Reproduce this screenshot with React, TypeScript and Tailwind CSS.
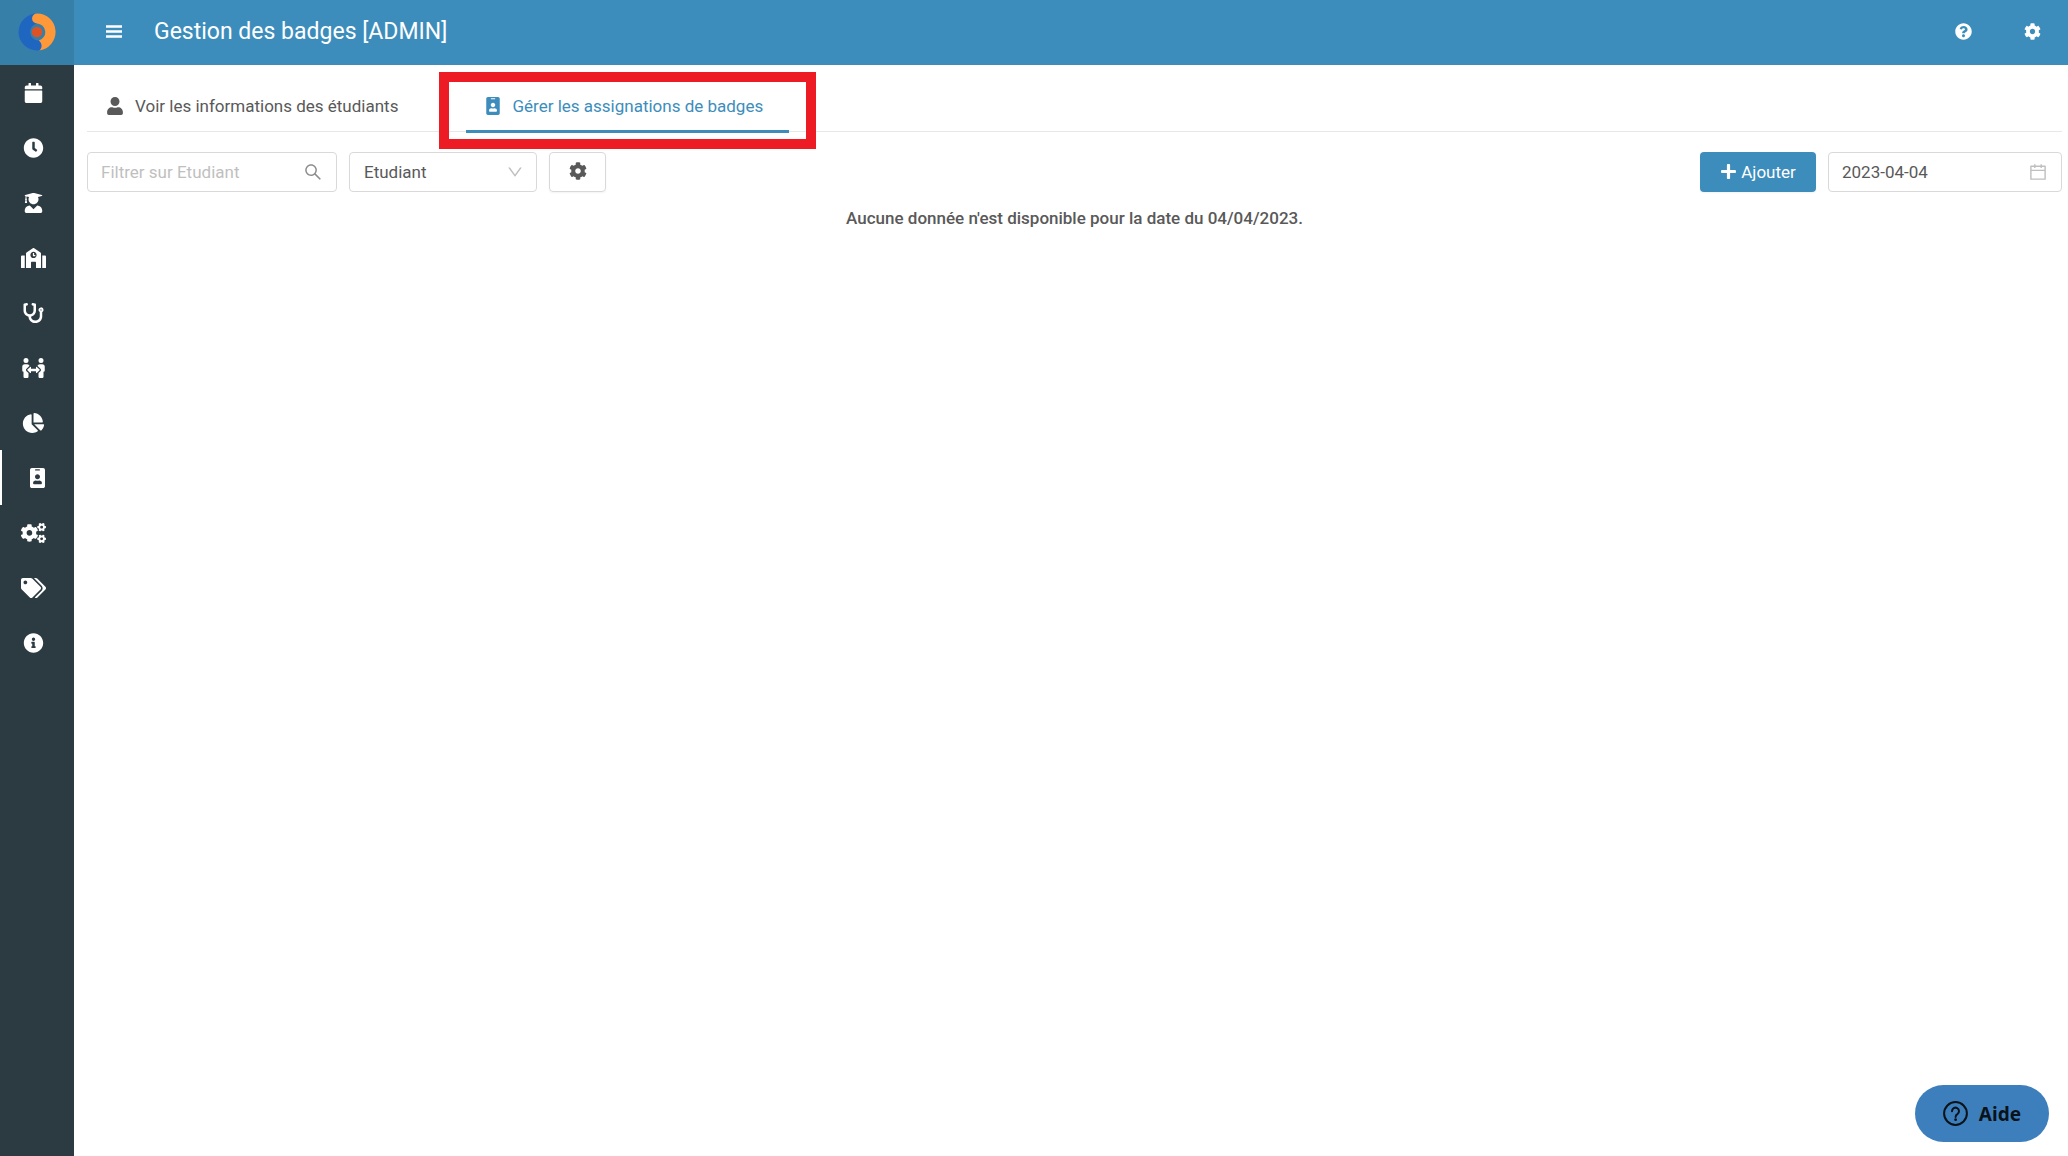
import type { IconType } from "react-icons"
import { AiOutlineCalendar, AiOutlineDown, AiOutlineSearch } from "react-icons/ai"
import {
  FaCalendar,
  FaChartPie,
  FaClock,
  FaCog,
  FaCogs,
  FaIdBadge,
  FaInfoCircle,
  FaPeopleArrows,
  FaPlus,
  FaQuestionCircle,
  FaSchool,
  FaStethoscope,
  FaTags,
  FaUser,
  FaUserGraduate,
} from "react-icons/fa"

type NavItem = {
  label: string
  icon: IconType
  active?: boolean
}

const navItems: NavItem[] = [
  { label: "Calendrier", icon: FaCalendar },
  { label: "Horaires", icon: FaClock },
  { label: "Etudiants", icon: FaUserGraduate },
  { label: "Ecole", icon: FaSchool },
  { label: "Santé", icon: FaStethoscope },
  { label: "Rencontres", icon: FaPeopleArrows },
  { label: "Statistiques", icon: FaChartPie },
  { label: "Badges", icon: FaIdBadge, active: true },
  { label: "Configuration", icon: FaCogs },
  { label: "Tags", icon: FaTags },
  { label: "Informations", icon: FaInfoCircle },
]

function Logo() {
  return (
    <svg viewBox="0 0 38 38" className="size-[38px]" aria-hidden="true">
      <path
        d="M19 .5A18.5 18.5 0 0 0 19 37.5L21 37.4A4.9 4.9 0 0 0 20.5 27.6A8.7 8.7 0 0 1 19 10.4Z"
        fill="#1f66c1"
      />
      <path
        d="M19 .5A18.5 18.5 0 0 1 21 37.4C24.4 35.6 24.6 30.6 20.8 27.5A8.7 8.7 0 0 0 19 10.4A4.95 4.95 0 0 1 19 .5Z"
        fill="#ff9838"
      />
      <circle cx="19" cy="19" r="5.3" fill="#dc5328" />
    </svg>
  )
}

function Sidebar() {
  return (
    <aside className="flex w-[74px] shrink-0 flex-col bg-[#2c3b41]">
      <a href="#" aria-label="Accueil" className="flex h-[65px] items-center justify-center bg-[#367fa9] pr-px pb-[2px]">
        <Logo />
      </a>
      <nav className="flex flex-col text-white">
        {navItems.map(({ label, icon: Icon, active }) => (
          <a
            key={label}
            href="#"
            aria-label={label}
            aria-current={active ? "page" : undefined}
            className={
              active
                ? "flex h-[55px] items-center justify-center border-l-2 border-white pr-px"
                : "flex h-[55px] items-center justify-center pr-[7px]"
            }
          >
            <Icon className="h-5 w-[25px]" />
          </a>
        ))}
      </nav>
    </aside>
  )
}

function TopBar() {
  return (
    <header className="flex h-[65px] items-center bg-[#3c8dbc] pr-[27px] pb-[2px] pl-8 text-white">
      <button type="button" aria-label="Menu">
        <svg viewBox="0 0 16 13" className="h-[13px] w-4" fill="currentColor">
          <path d="M0 .3h16v2.4H0zM0 5.3h16v2.4H0zM0 10.3h16v2.4H0z" />
        </svg>
      </button>
      <h1 className="ml-8 pt-px text-[23px]">Gestion des badges [ADMIN]</h1>
      <div className="ml-auto flex items-center gap-[52px]">
        <button type="button" aria-label="Aide en ligne">
          <FaQuestionCircle className="size-[17px]" />
        </button>
        <button type="button" aria-label="Paramètres">
          <FaCog className="size-[17px]" />
        </button>
      </div>
    </header>
  )
}

function Tabs() {
  return (
    <div role="tablist" className="flex h-[67px] gap-[42px] border-b border-[#e8e8e8]">
      <button type="button" role="tab" aria-selected="false" className="flex h-full items-center pt-4 pr-[26px] pl-5">
        <FaUser className="mr-3 h-[18px] w-4" />
        Voir les informations des étudiants
      </button>
      <button
        type="button"
        role="tab"
        aria-selected="true"
        className="relative -mb-px flex h-[68px] items-center border-b-[3px] border-[#3c8dbc] pt-4 pr-[26px] pl-5 text-[#3c8dbc]"
      >
        <FaIdBadge className="mr-3 h-[18px] w-[14px]" />
        Gérer les assignations de badges
        <span className="pointer-events-none absolute -inset-x-[27px] top-[7px] -bottom-[19px] border-10 border-[#ed1c24]" />
      </button>
    </div>
  )
}

function Toolbar() {
  return (
    <div className="mt-5 flex h-10 gap-3">
      <div className="flex w-[250px] items-center rounded border border-[#d9d9d9] px-[13px]">
        <input
          type="text"
          aria-label="Filtrer sur Etudiant"
          placeholder="Filtrer sur Etudiant"
          className="min-w-0 flex-1 outline-none placeholder:text-[#bfbfbf]"
        />
        <AiOutlineSearch className="size-5 text-[#8c8c8c]" />
      </div>
      <div className="relative w-[188px]">
        <select
          aria-label="Champ de filtre"
          className="h-full w-full appearance-none rounded border border-[#d9d9d9] bg-white pb-px pl-[14px]"
        >
          <option>Etudiant</option>
        </select>
        <AiOutlineDown className="pointer-events-none absolute top-[11px] right-[13px] size-[18px] text-[#bfbfbf]" />
      </div>
      <button
        type="button"
        aria-label="Options"
        className="flex w-[57px] items-center justify-center rounded border border-[#d9d9d9] pb-[2px] shadow-xs"
      >
        <FaCog className="size-[18px]" />
      </button>
      <button
        type="button"
        className="ml-auto flex w-[116px] items-center justify-center gap-1 rounded bg-[#3c8dbc] pb-px text-white shadow-xs"
      >
        <FaPlus className="size-[17px]" />
        Ajouter
      </button>
      <div className="flex w-[234px] items-center rounded border border-[#d9d9d9] px-[13px]">
        <input type="text" aria-label="Date" defaultValue="2023-04-04" className="min-w-0 flex-1 outline-none" />
        <AiOutlineCalendar className="size-5 text-[#bfbfbf]" />
      </div>
    </div>
  )
}

export default function App() {
  return (
    <div className="flex min-h-screen bg-white font-['Roboto',sans-serif] text-[17px] leading-6 text-[#595959]">
      <Sidebar />
      <div className="flex min-w-0 flex-1 flex-col">
        <TopBar />
        <main className="pr-[6px] pl-[13px]">
          <Tabs />
          <Toolbar />
          <p className="mt-[14px] text-center font-medium">
            Aucune donnée n'est disponible pour la date du 04/04/2023.
          </p>
        </main>
      </div>
      <button
        type="button"
        className="fixed right-[19px] bottom-[14px] flex h-[57px] items-center gap-[11px] rounded-full bg-[#3d7fbd] px-7 font-['Noto_Sans',sans-serif] text-[19px] font-bold text-[#0b131a]"
      >
        <svg viewBox="0 0 25 25" className="size-[25px]" fill="none" stroke="currentColor" strokeWidth="2">
          <circle cx="12.5" cy="12.5" r="11.4" />
          <path d="M9 10.2a3.5 3.5 0 1 1 5.4 2.9c-1.2.7-1.8 1.3-1.8 2.9" strokeLinecap="round" />
          <circle cx="12.6" cy="18.7" r="1.4" fill="currentColor" stroke="none" />
        </svg>
        Aide
      </button>
    </div>
  )
}
